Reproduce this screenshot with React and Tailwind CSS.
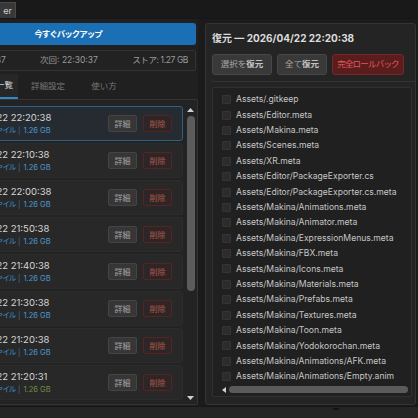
import React from "react";

const font = { fontFamily: '"Inter", "Noto Sans CJK JP", sans-serif' };

const snapshots = [
  { time: "2026/04/22 22:20:38", size: "1.26 GB", active: true },
  { time: "2026/04/22 22:10:38", size: "1.26 GB" },
  { time: "2026/04/22 22:00:38", size: "1.26 GB" },
  { time: "2026/04/22 21:50:38", size: "1.26 GB" },
  { time: "2026/04/22 21:40:38", size: "1.26 GB" },
  { time: "2026/04/22 21:30:38", size: "1.26 GB" },
  { time: "2026/04/22 21:20:38", size: "1.26 GB" },
  { time: "2026/04/22 21:20:31", size: "1.26 GB", full: true },
];

const files = [
  "Assets/.gitkeep",
  "Assets/Editor.meta",
  "Assets/Makina.meta",
  "Assets/Scenes.meta",
  "Assets/XR.meta",
  "Assets/Editor/PackageExporter.cs",
  "Assets/Editor/PackageExporter.cs.meta",
  "Assets/Makina/Animations.meta",
  "Assets/Makina/Animator.meta",
  "Assets/Makina/ExpressionMenus.meta",
  "Assets/Makina/FBX.meta",
  "Assets/Makina/Icons.meta",
  "Assets/Makina/Materials.meta",
  "Assets/Makina/Prefabs.meta",
  "Assets/Makina/Textures.meta",
  "Assets/Makina/Toon.meta",
  "Assets/Makina/Yodokorochan.meta",
  "Assets/Makina/Animations/AFK.meta",
  "Assets/Makina/Animations/Empty.anim",
];

function SnapshotCard({ snap }) {
  return (
    <div
      className={
        "h-[35px] shrink-0 flex items-center pl-[8px] pr-[10px] rounded-[3px] border " +
        (snap.active ? "bg-[#252b31] border-[#2c5f86]" : "bg-[#282828] border-[#2c2c2c]")
      }
    >
      <div className="flex-1 flex flex-col leading-none">
        <span className="text-[9.5px] text-[#d6d6d6]">{snap.time}</span>
        <div className="mt-[5px] flex items-center text-[7.5px] text-[#3f8fca] whitespace-nowrap">
          <span className="w-[61px] text-right tracking-[-1.2px]">12,480 ファイル</span>
          <span className="ml-[3px] mr-[3px] text-[#3a6f99]">|</span>
          <span className={snap.full ? "text-[#6f8f4a]" : "text-[#4b9bd3]"}>{snap.size}</span>
        </div>
      </div>
      <button className="w-[29px] h-[17px] rounded-[2px] bg-[#363636] border border-[#444] text-[8px] text-[#a5a5a5]">
        詳細
      </button>
      <button className="ml-[6px] w-[29px] h-[17px] rounded-[2px] bg-[#2e2626] border border-[#562424] text-[8px] text-[#b5564f]">
        削除
      </button>
    </div>
  );
}

export default function App() {
  return (
    <div className="w-[418px] h-[418px] overflow-hidden bg-[#1b1b1b] flex flex-col" style={font}>
      {/* window tab strip */}
      <div className="h-[19px] shrink-0 flex items-end bg-[#191919] border-b border-[#151515]">
        <div className="h-[16px] w-[16px] bg-[#383838] border-t border-r border-[#4a4a4a] text-[9px] text-[#cfcfcf] flex items-center justify-end pr-[3px]">
          er
        </div>
      </div>

      <div className="flex-1 min-h-0 flex">
        {/* left column */}
        <div className="ml-[-60px] w-[258px] shrink-0 flex flex-col pt-[4px] pb-[1px] bg-[#202020]">
          <button className="h-[22px] w-[256px] shrink-0 rounded-[3px] bg-[#1b6fb4] text-[8.5px] font-bold text-white tracking-[-1px]">
            今すぐバックアップ
          </button>
          <div className="mt-[5px] h-[21px] w-[256px] shrink-0 flex items-center justify-between px-[7px] rounded-[2px] bg-[#222] border border-[#333] text-[8.5px] text-[#9a9a9a]">
            <span>前回: 22:20:37</span>
            <span>次回: 22:30:37</span>
            <span className="tracking-[-0.4px]">ストア: 1.27 GB</span>
          </div>
          <div className="mt-[3px] h-[25px] shrink-0 flex text-[8.5px]">
            <div className="w-[78px] flex items-center justify-end pr-[5px] bg-[#272727] border-b-2 border-[#3486c4] text-[#d8d8d8]">
              一覧
            </div>
            <div className="w-[60px] flex items-center justify-center text-[#777]">詳細設定</div>
            <div className="w-[52px] flex items-center justify-center text-[#777]">使い方</div>
          </div>
          <div className="flex-1 min-h-0 flex border border-[#343434] rounded-[2px] bg-[#232323]">
            <div className="flex-1 flex flex-col gap-[2px] pt-[6px] pl-[4px] pr-[1px] overflow-hidden">
              {snapshots.map((s) => (
                <SnapshotCard key={s.time} snap={s} />
              ))}
            </div>
            {/* scrollbar */}
            <div className="w-[13px] shrink-0 flex flex-col items-center pt-[8px] pb-[4px]">
              <svg width="7" height="4" viewBox="0 0 7 4">
                <path d="M0 4 L3.5 0 L7 4 Z" fill="#d0d0d0" />
              </svg>
              <div className="mt-[4px] w-[8px] flex-1 flex flex-col">
                <div className="h-[175px] rounded-full bg-[#5c5c5c]" />
              </div>
              <svg width="7" height="4" viewBox="0 0 7 4" className="mt-[6px]">
                <path d="M0 0 L3.5 4 L7 0 Z" fill="#d0d0d0" />
              </svg>
            </div>
          </div>
        </div>

        {/* right panel */}
        <div className="ml-[7px] mr-[2px] mt-[4px] mb-[1px] flex-1 min-w-0 flex flex-col rounded-[3px] bg-[#242424] border border-[#343434] pl-[6px]">
          <div className="pt-[2px] h-[27px] flex items-center text-[10px] font-bold text-[#dcdcdc]">
            復元 — 2026/04/22 22:20:38
          </div>
          <div className="mt-[3px] flex gap-[5px] text-[8.5px]">
            <button className="h-[21px] w-[60px] rounded-[3px] bg-[#393939] border border-[#474747] text-[#a8a8a8]">
              選択を<span className="font-bold text-[#c4c4c4]">復元</span>
            </button>
            <button className="h-[21px] w-[50px] rounded-[3px] bg-[#393939] border border-[#474747] text-[#a8a8a8]">
              全て<span className="font-bold text-[#c4c4c4]">復元</span>
            </button>
            <button className="h-[21px] w-[72px] rounded-[3px] bg-[#5a1d1d] border border-[#7a2727] text-[#e25b5b] tracking-[-0.8px]">
              完全ロールバック
            </button>
          </div>
          <div className="mt-[6px] h-px bg-[#343434]" />
          <div className="mt-[5px] mr-[3px] mb-[7px] flex-1 min-h-0 flex flex-col rounded-[2px] bg-[#202020] border border-[#303030] pl-[9px] pt-[4px]">
            {files.map((f) => (
              <div key={f} className="h-[15.4px] shrink-0 flex items-center gap-[5px]">
                <div className="w-[9px] h-[9px] rounded-[1px] bg-[#2c2c2c] border border-[#353535]" />
                <span className="text-[8.6px] text-[#c6c6c6] whitespace-nowrap">{f}</span>
              </div>
            ))}
            <div className="mt-[2px] flex items-center gap-[3px]">
              <svg width="4" height="6" viewBox="0 0 4 6">
                <path d="M4 0 L0 3 L4 6 Z" fill="#d0d0d0" />
              </svg>
              <div className="w-[179px] h-[7px] rounded-full bg-[#5a5a5a]" />
            </div>
          </div>
        </div>
      </div>

      {/* bottom strip */}
      <div className="h-[12px] shrink-0 bg-[#252525] border-t border-[#161616] flex">
        <div className="ml-[333px] mt-[1px] w-[6px] h-[2px] bg-[#141414]" />
      </div>
    </div>
  );
}
